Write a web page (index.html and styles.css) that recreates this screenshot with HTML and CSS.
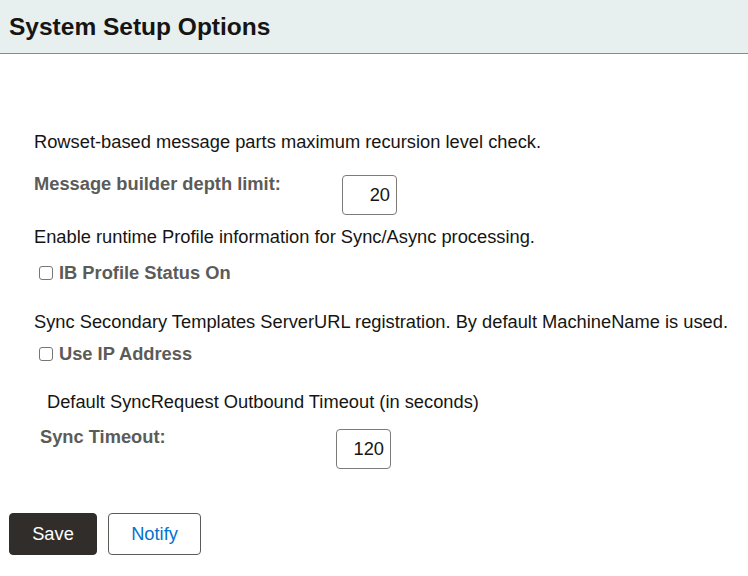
FILE: index.html
```html
<!DOCTYPE html>
<html>
<head>
<meta charset="utf-8">
<link rel="stylesheet" href="styles.css">
</head>
<body>
<header class="page-header"><h1 class="title">System Setup Options</h1></header>
<main class="content">
  <section class="group group-depth">
    <p class="desc">Rowset-based message parts maximum recursion level check.</p>
    <div class="field-row">
      <label class="field-label label-depth">Message builder depth limit:</label>
      <div class="num-box">20</div>
    </div>
  </section>
  <section class="group group-profile">
    <p class="desc">Enable runtime Profile information for Sync/Async processing.</p>
    <label class="check-row"><span class="checkbox"></span><span class="check-label">IB Profile Status On</span></label>
  </section>
  <section class="group group-ip">
    <p class="desc">Sync Secondary Templates ServerURL registration. By default MachineName is used.</p>
    <label class="check-row"><span class="checkbox"></span><span class="check-label">Use IP Address</span></label>
  </section>
  <section class="group group-timeout">
    <p class="desc desc-indent">Default SyncRequest Outbound Timeout (in seconds)</p>
    <div class="field-row field-row-timeout">
      <label class="field-label label-timeout">Sync Timeout:</label>
      <div class="num-box num-box-timeout">120</div>
    </div>
  </section>
</main>
<footer class="actions">
  <button class="btn btn-primary">Save</button>
  <button class="btn btn-secondary">Notify</button>
</footer>
</body>
</html>
```
FILE: styles.css
```css
* { box-sizing: border-box; }
body {
  margin: 0;
  font-family: "Liberation Sans", Arial, sans-serif;
  color: #161513;
  background: #fff;
  width: 748px;
}
.page-header {
  height: 54px;
  background: #e8f0ef;
  border-bottom: 1px solid #8a8a87;
  display: flex;
  align-items: center;
  padding-left: 9px;
}
.title {
  margin: 0;
  font-size: 24.5px;
  font-weight: bold;
  color: #161513;
}
.content {
  padding: 0 0 0 34px;
  margin-top: 77px;
}
.desc {
  margin: 0;
  font-size: 18.3px;
  line-height: 22px;
}
.desc-indent { padding-left: 13px; }
.field-row {
  display: flex;
  align-items: flex-start;
}
.field-label {
  font-size: 18.3px;
  font-weight: bold;
  color: #5b5b59;
  line-height: 22px;
}
.group-depth .field-row { margin-top: 20px; }
.group-depth .num-box { margin-top: 2px; }
.label-depth { width: 308px; }
.num-box {
  width: 55px;
  height: 40px;
  border: 1px solid #7c7b78;
  border-radius: 4px;
  font-size: 18.3px;
  text-align: right;
  padding-right: 6px;
  line-height: 38px;
  color: #161513;
}
.group-profile { margin-top: 11px; }
.check-row {
  display: flex;
  align-items: center;
  padding-left: 5px;
  margin-top: 14px;
}
.checkbox {
  width: 14px;
  height: 14px;
  border: 1px solid #767676;
  border-radius: 3px;
  margin-right: 6px;
  background: #fff;
}
.check-label {
  font-size: 18.3px;
  font-weight: bold;
  color: #5b5b59;
  line-height: 22px;
}
.group-ip { margin-top: 27px; }
.group-ip .check-row { margin-top: 10px; }
.group-timeout { margin-top: 26px; }
.field-row-timeout { margin-top: 13px; padding-left: 6px; }
.num-box-timeout { margin-top: 3px; }
.label-timeout { width: 296px; }
.actions {
  display: flex;
  gap: 11px;
  padding-left: 9px;
  margin-top: 44px;
}
.btn {
  height: 42px;
  border-radius: 4px;
  font-family: "Liberation Sans", Arial, sans-serif;
  font-size: 18.3px;
  cursor: pointer;
}
.btn-primary {
  width: 88px;
  background: #312d2a;
  color: #fff;
  border: 1px solid #312d2a;
}
.btn-secondary {
  width: 93px;
  background: #fff;
  color: #0572ce;
  border: 1px solid #5b5b59;
}
```
